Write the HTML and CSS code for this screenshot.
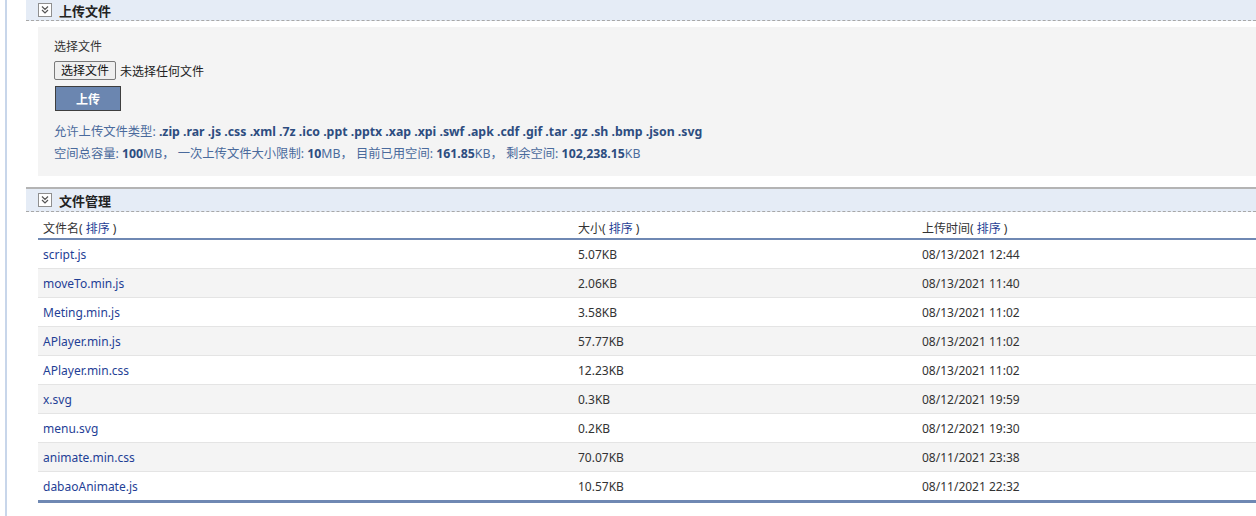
FILE: index.html
```html
<!DOCTYPE html>
<html lang="zh">
<head>
<meta charset="utf-8">
<link rel="stylesheet" href="styles.css">
</head>
<body>
<div class="frame">
  <div class="main">
    <div class="sec-head">
      <span class="toggle"><svg width="10" height="10" viewBox="0 0 10 10"><path d="M2 1.5 L5 4.5 L8 1.5 M2 5 L5 8 L8 5" fill="none" stroke="#555" stroke-width="1.2"/></svg></span>
      <span class="sec-title">上传文件</span>
    </div>
    <div class="upload">
      <div class="lbl">选择文件</div>
      <div class="file-row"><span class="file-btn">选择文件</span><span class="file-none">未选择任何文件</span></div>
      <div class="submit">上传</div>
      <div class="info types">允许上传文件类型: <b>.zip .rar .js .css .xml .7z .ico .ppt .pptx .xap .xpi .swf .apk .cdf .gif .tar .gz .sh .bmp .json .svg</b></div>
      <div class="info">空间总容量: <b>100</b>MB， 一次上传文件大小限制: <b>10</b>MB， 目前已用空间: <b>161.85</b>KB， 剩余空间: <b>102,238.15</b>KB</div>
    </div>
    <div class="sec-head second">
      <span class="toggle"><svg width="10" height="10" viewBox="0 0 10 10"><path d="M2 1.5 L5 4.5 L8 1.5 M2 5 L5 8 L8 5" fill="none" stroke="#555" stroke-width="1.2"/></svg></span>
      <span class="sec-title">文件管理</span>
    </div>
    <table class="files">
      <thead>
        <tr><th class="c1">文件名( <a>排序</a> )</th><th class="c2">大小( <a>排序</a> )</th><th>上传时间( <a>排序</a> )</th></tr>
      </thead>
      <tbody>
        <tr><td><a>script.js</a></td><td>5.07KB</td><td>08/13/2021 12:44</td></tr>
        <tr class="alt"><td><a>moveTo.min.js</a></td><td>2.06KB</td><td>08/13/2021 11:40</td></tr>
        <tr><td><a>Meting.min.js</a></td><td>3.58KB</td><td>08/13/2021 11:02</td></tr>
        <tr class="alt"><td><a>APlayer.min.js</a></td><td>57.77KB</td><td>08/13/2021 11:02</td></tr>
        <tr><td><a>APlayer.min.css</a></td><td>12.23KB</td><td>08/13/2021 11:02</td></tr>
        <tr class="alt"><td><a>x.svg</a></td><td>0.3KB</td><td>08/12/2021 19:59</td></tr>
        <tr><td><a>menu.svg</a></td><td>0.2KB</td><td>08/12/2021 19:30</td></tr>
        <tr class="alt"><td><a>animate.min.css</a></td><td>70.07KB</td><td>08/11/2021 23:38</td></tr>
        <tr><td><a>dabaoAnimate.js</a></td><td>10.57KB</td><td>08/11/2021 22:32</td></tr>
      </tbody>
    </table>
  </div>
</div>
</body>
</html>
```
FILE: styles.css
```css
html, body {
  margin: 0;
  padding: 0;
  background: #fff;
}
body {
  font-family: "Noto Sans", "Noto Sans CJK SC", sans-serif;
  font-size: 12px;
  color: #333;
  padding-left: 5px;
}
.frame {
  border-left: 2px solid #c8d6ea;
  min-height: 516px;
  padding-left: 19px;
}
.main {
  display: flex;
  flex-direction: column;
}
.sec-head {
  height: 20px;
  background: #e5ecf6;
  border-bottom: 1px dashed #a8a8a8;
  display: flex;
  align-items: center;
  padding-left: 12px;
  gap: 7px;
}
.sec-head.second {
  border-top: 2px solid #b4b4b4;
  height: 22px;
  margin-top: 11px;
}
.toggle {
  width: 12px;
  height: 12px;
  border: 1px solid #8f8f8f;
  background: #fff;
  display: flex;
  align-items: center;
  justify-content: center;
}
.sec-title {
  font-size: 13px;
  font-weight: bold;
  color: #222;
}
.upload {
  margin: 6px 0 0 12px;
  background: #f4f4f4;
  padding: 10px 16px 11px;
  display: flex;
  flex-direction: column;
  align-items: flex-start;
}
.lbl {
  line-height: 20px;
  color: #333;
}
.file-row {
  display: flex;
  align-items: center;
  margin-top: 4px;
  gap: 4px;
}
.file-btn {
  border: 1px solid #7a7a7a;
  border-radius: 2px;
  background: #efefef;
  padding: 0 6px;
  line-height: 17px;
  color: #111;
}
.file-none {
  color: #222;
}
.submit {
  margin-top: 6px;
  margin-left: 1px;
  width: 64px;
  height: 23px;
  background: #6b86b0;
  border: 1px solid #3e3e3e;
  color: #fff;
  font-weight: bold;
  display: flex;
  align-items: center;
  justify-content: center;
}
.info {
  color: #4a6a9c;
  line-height: 22px;
  font-size: 12.3px;
}
.info b {
  color: #2d4d80;
}
.types {
  margin-top: 10px;
}
.files {
  margin-left: 12px;
  width: calc(100% - 12px);
  border-collapse: collapse;
  border-bottom: 3px solid #6f88b3;
}
.files th {
  text-align: left;
  font-weight: normal;
  color: #333;
  height: 20px;
  padding: 6px 0 0 5px;
  border-bottom: 2px solid #6f88b3;
}
.files th a {
  color: #1f3f96;
}
.c1 { width: 530px; }
.c2 { width: 339px; }
.files td {
  height: 28px;
  padding: 0 0 0 5px;
  border-bottom: 1px solid #e4e4e4;
  color: #333;
}
.files tr:last-child td {
  border-bottom: none;
}
.files td a {
  color: #1f3f96;
}
.files tr.alt td {
  background: #f4f4f4;
}
```
